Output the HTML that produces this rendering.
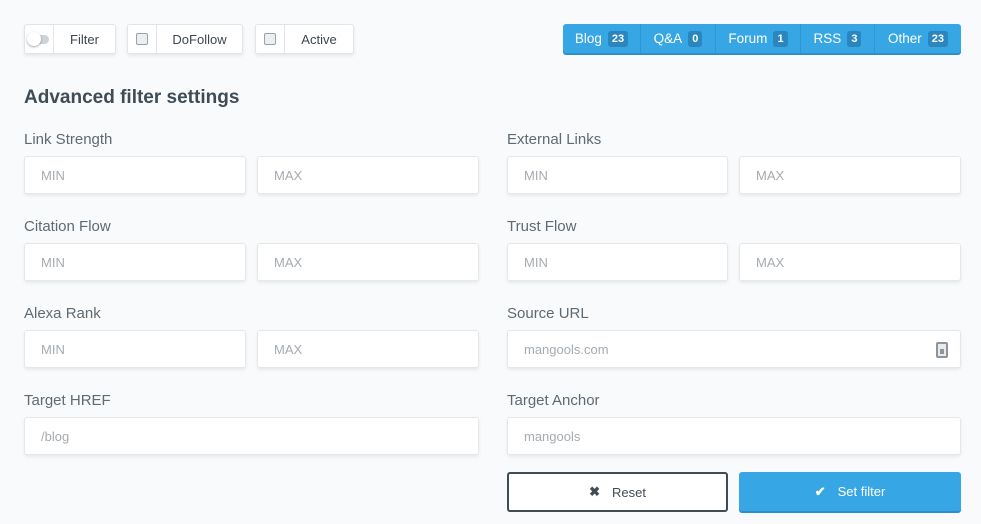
<!DOCTYPE html>
<html><head><style>
*{box-sizing:border-box;margin:0;padding:0}
body{width:981px;height:524px;background:#f8fafb;font-family:"Liberation Sans",sans-serif;position:relative;overflow:hidden;color:#4d5a63}
.a{position:absolute}
.btn{position:absolute;top:24px;height:30px;background:#fff;border:1px solid #e2e5e7;border-radius:3px;box-shadow:0 2px 3px rgba(0,0,0,.08);display:flex;font-size:13px;color:#3c4650}
.btn .l{width:29px;border-right:1px solid #e2e5e7;display:flex;align-items:center;justify-content:center}
.btn .t{flex:1;display:flex;align-items:center;justify-content:center}
.cb{width:12px;height:12px;border:1px solid #9aa3a9;border-radius:2px;background:#eceef0}
.tabs{position:absolute;left:563px;top:24px;width:398px;height:29px;background:#36a6e5;border-radius:3px;box-shadow:0 2px 0 #2a8fcb;display:flex;color:#fff;font-size:13.5px}
.tabs div{display:flex;align-items:center;justify-content:center;border-right:1px solid #2f97d3}
.tabs div:last-child{border-right:none}
.tabs b{background:#2a86bd;font-size:11px;border-radius:3px;padding:2px 4px;margin-left:6px}
.lab{position:absolute;font-size:15px;color:#5f6a72}
.in{position:absolute;height:38px;background:#fff;border:1px solid #e5e8ea;border-radius:3px;box-shadow:0 2px 3px rgba(0,0,0,.07);font-size:13px;color:#a5abb0;padding-left:16px;display:flex;align-items:center}
</style></head><body>
<div class="btn" style="left:24px;width:92px"><div class="l"><div style="width:20px;height:9px;border-radius:5px;background:#cfd3d6;position:relative"><div style="position:absolute;left:-2px;top:-3px;width:14px;height:14px;border-radius:50%;background:#fff;box-shadow:0 1px 2px rgba(0,0,0,.35)"></div></div></div><div class="t">Filter</div></div>
<div class="btn" style="left:127px;width:116px"><div class="l"><div class="cb"></div></div><div class="t">DoFollow</div></div>
<div class="btn" style="left:255px;width:99px"><div class="l"><div class="cb"></div></div><div class="t">Active</div></div>
<div class="tabs"><div style="width:78px">Blog<b>23</b></div><div style="width:75px">Q&amp;A<b>0</b></div><div style="width:85px">Forum<b>1</b></div><div style="width:74px">RSS<b>3</b></div><div style="flex:1">Other<b>23</b></div></div>
<div class="a" style="left:24px;top:87px;font-size:19px;font-weight:bold;color:#3f4b55">Advanced filter settings</div>

<div class="lab" style="left:24px;top:131px">Link Strength</div>
<div class="lab" style="left:507px;top:131px">External Links</div>
<div class="in" style="left:24px;top:156px;width:222px">MIN</div>
<div class="in" style="left:257px;top:156px;width:222px">MAX</div>
<div class="in" style="left:507px;top:156px;width:221px">MIN</div>
<div class="in" style="left:739px;top:156px;width:222px">MAX</div>

<div class="lab" style="left:24px;top:218px">Citation Flow</div>
<div class="lab" style="left:507px;top:218px">Trust Flow</div>
<div class="in" style="left:24px;top:243px;width:222px">MIN</div>
<div class="in" style="left:257px;top:243px;width:222px">MAX</div>
<div class="in" style="left:507px;top:243px;width:221px">MIN</div>
<div class="in" style="left:739px;top:243px;width:222px">MAX</div>

<div class="lab" style="left:24px;top:305px">Alexa Rank</div>
<div class="lab" style="left:507px;top:305px">Source URL</div>
<div class="in" style="left:24px;top:330px;width:222px">MIN</div>
<div class="in" style="left:257px;top:330px;width:222px">MAX</div>
<div class="in" style="left:507px;top:330px;width:454px">mangools.com<div style="position:absolute;right:12px;top:11px;width:12px;height:16px;border:2px solid #8d959b;border-radius:2px;background:#e8eaec"><div style="position:absolute;left:2px;top:5px;width:4px;height:5px;background:#8d959b"></div></div></div>

<div class="lab" style="left:24px;top:392px">Target HREF</div>
<div class="lab" style="left:507px;top:392px">Target Anchor</div>
<div class="in" style="left:24px;top:417px;width:455px">/blog</div>
<div class="in" style="left:507px;top:417px;width:454px">mangools</div>

<div class="a" style="left:507px;top:472px;width:221px;height:40px;border:2px solid #3f4b55;border-radius:3px;background:#fff;display:flex;align-items:center;justify-content:center;font-size:13px;color:#3f4b55"><span style="font-weight:bold;margin-right:12px">✖</span>Reset</div>
<div class="a" style="left:739px;top:472px;width:222px;height:39px;background:#36a6e5;border-radius:3px;box-shadow:0 2px 0 #2a8fcb;display:flex;align-items:center;justify-content:center;font-size:13px;color:#fff"><span style="margin-right:12px;font-weight:bold">✔</span>Set filter</div>
</body></html>
